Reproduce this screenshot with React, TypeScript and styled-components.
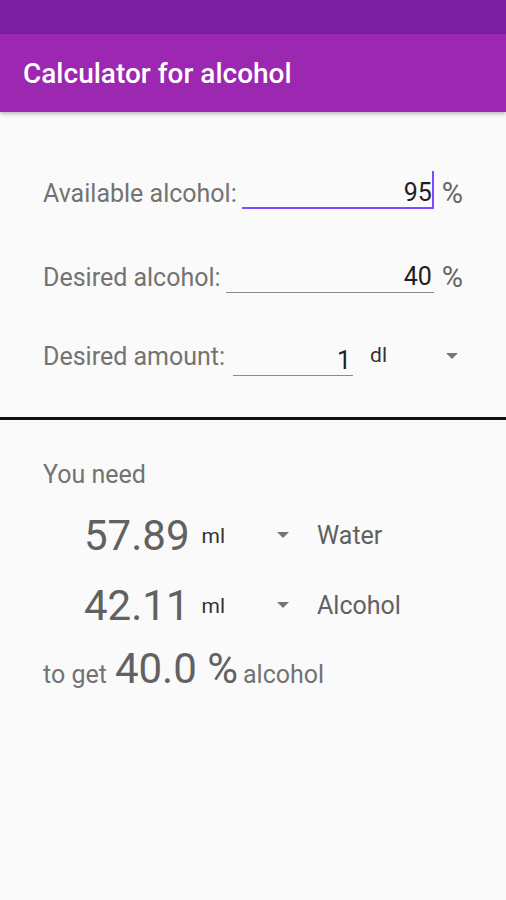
import { FC } from "react";
import { styled, createGlobalStyle } from "styled-components";

const GlobalStyle = createGlobalStyle`
  html, body {
    margin: 0;
    padding: 0;
    background: #fafafa;
    font-family: Roboto, "Noto Sans", sans-serif;
  }
`;

interface InputRowProps {
  label: string;
  value: string;
  focused?: boolean;
  top: number;
}

const InputRow: FC<InputRowProps> = ({ label, value, focused, top }) => (
  <Row $top={top}>
    <Label>{label}</Label>
    <Field $focused={focused}>
      <Value>{value}</Value>
      {focused && <Cursor />}
    </Field>
    <Percent>%</Percent>
  </Row>
);

interface ResultProps {
  amount: string;
  unit: string;
  name: string;
}

const ResultRow: FC<ResultProps> = ({ amount, unit, name }) => (
  <ResultLine>
    <BigNumber>{amount}</BigNumber>
    <Unit $drop={4}>{unit}</Unit>
    <Arrow $left={52} />
    <Name>{name}</Name>
  </ResultLine>
);

const App: FC = () => {
  return (
    <Page>
      <GlobalStyle />
      <StatusBar />
      <AppBar>
        <Title>Calculator for alcohol</Title>
      </AppBar>
      <Form>
        <InputRow label="Available alcohol:" value="95" focused top={0} />
        <InputRow label="Desired alcohol:" value="40" top={40} />
        <Row $top={35}>
          <Label>Desired amount:</Label>
          <Field $width={120} $drop={12} $gap={8}>
            <Value>1</Value>
          </Field>
          <Unit $left={17}>dl</Unit>
          <Spacer />
          <Arrow $left={0} $right={5} />
        </Row>
      </Form>
      <Divider />
      <Results>
        <Heading>You need</Heading>
        <ResultRow amount="57.89" unit="ml" name="Water" />
        <ResultRow amount="42.11" unit="ml" name="Alcohol" />
        <Summary>
          <Label>to get</Label>
          <BigNumber $left={8}>40.0 %</BigNumber>
          <Label $left={5}>alcohol</Label>
        </Summary>
      </Results>
    </Page>
  );
};
export default App;

const Page = styled.div`
  width: 506px;
  min-height: 900px;
  background: #fafafa;
`;

const StatusBar = styled.div`
  height: 34px;
  background: #7b1fa2;
`;

const AppBar = styled.header`
  height: 78px;
  background: #9c27b0;
  display: flex;
  align-items: center;
  padding-left: 23px;
  box-shadow: 0 2px 4px rgba(0, 0, 0, 0.25);
  position: relative;
`;

const Title = styled.h1`
  margin: 0;
  color: #ffffff;
  font-size: 28px;
  font-weight: 500;
`;

const Form = styled.div`
  display: flex;
  flex-direction: column;
  padding: 59px 43px 38px 43px;
`;

const Row = styled.div<{ $top: number }>`
  display: flex;
  align-items: center;
  height: 44px;
  margin-top: ${(p) => p.$top}px;
`;

const Label = styled.span<{ $left?: number }>`
  font-size: 25px;
  color: #737373;
  margin-left: ${(p) => p.$left ?? 0}px;
  white-space: nowrap;
`;

const Heading = styled(Label)`
  margin-bottom: 11px;
`;

const Field = styled.div<{ $focused?: boolean; $width?: number; $drop?: number; $gap?: number }>`
  position: relative;
  ${(p) => (p.$width ? `width: ${p.$width}px;` : "flex: 1;")}
  margin-left: ${(p) => p.$gap ?? 5}px;
  margin-top: ${(p) => p.$drop ?? 3}px;
  height: 28px;
  display: flex;
  align-items: center;
  justify-content: flex-end;
  padding-right: 2px;
  border-bottom: ${(p) => (p.$focused ? "2px solid #7c4dff" : "1px solid #8a8a8a")};
  box-sizing: border-box;
`;

const Value = styled.span`
  font-size: 25px;
  color: #1f1f1f;
  margin-top: -3px;
`;

const Cursor = styled.span`
  position: absolute;
  right: 0;
  top: -10px;
  bottom: 0;
  width: 2px;
  background: #7c4dff;
`;

const Percent = styled.span`
  font-size: 29px;
  color: #666666;
  margin-left: 8px;
`;

const Unit = styled.span<{ $left?: number; $drop?: number }>`
  font-size: 21px;
  color: #333333;
  margin-left: ${(p) => p.$left ?? 12}px;
  margin-top: ${(p) => p.$drop ?? 0}px;
  margin-bottom: 2px;
`;

const Spacer = styled.div`
  flex: 1;
`;

const Arrow = styled.span<{ $left: number; $right?: number }>`
  width: 0;
  height: 0;
  border-left: 6px solid transparent;
  border-right: 6px solid transparent;
  border-top: 6px solid #757575;
  margin-left: ${(p) => p.$left}px;
  margin-right: ${(p) => p.$right ?? 0}px;
`;

const Divider = styled.div`
  height: 3px;
  margin-top: 1px;
  background: #111111;
`;

const Results = styled.div`
  display: flex;
  flex-direction: column;
  padding: 40px 43px;
`;

const ResultLine = styled.div`
  display: flex;
  align-items: center;
  height: 70px;
  padding-left: 41px;
`;

const BigNumber = styled.span<{ $left?: number }>`
  font-size: 42px;
  color: #616161;
  margin-left: ${(p) => p.$left ?? 0}px;
`;

const Name = styled.span`
  font-size: 25px;
  color: #616161;
  margin-left: 28px;
`;

const Summary = styled.div`
  display: flex;
  align-items: baseline;
  height: 70px;
  padding-top: 4px;
`;
